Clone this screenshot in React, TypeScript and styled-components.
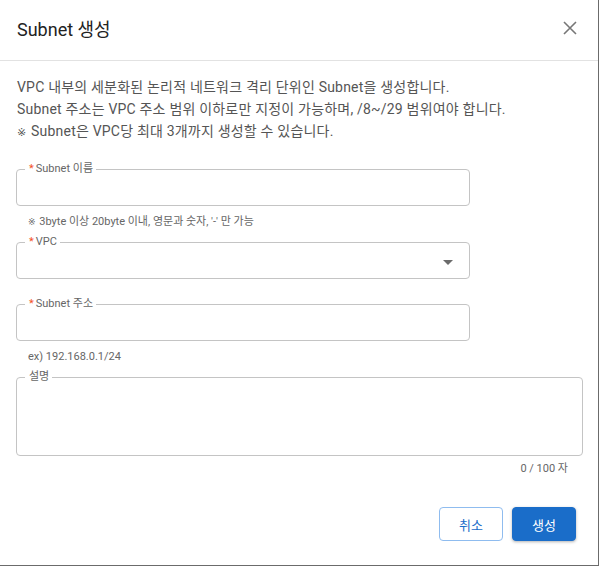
import styled, { createGlobalStyle } from "styled-components";

const GlobalStyle = createGlobalStyle`
  * {
    box-sizing: border-box;
  }
  body {
    margin: 0;
    background: #ffffff;
    font-family: Roboto, "Noto Sans CJK KR", sans-serif;
  }
`;

const Dialog = styled.div`
  display: flex;
  flex-direction: column;
  width: 599px;
  height: 566px;
  background: #ffffff;
  border-right: 1px solid #6b6b6b;
  border-bottom: 1px solid #6b6b6b;
`;

const Header = styled.div`
  display: flex;
  align-items: center;
  justify-content: space-between;
  height: 61px;
  padding: 0 18px 4px 17px;
  border-bottom: 1px solid #e2e2e2;
`;

const Title = styled.h2`
  margin: 0;
  font-size: 18px;
  font-weight: 400;
  color: #222222;
`;

const CloseButton = styled.button`
  display: flex;
  align-items: center;
  justify-content: center;
  width: 20px;
  height: 20px;
  padding: 0;
  border: none;
  background: transparent;
  color: #777777;
  cursor: pointer;
`;

const Body = styled.div`
  display: flex;
  flex-direction: column;
  padding: 15px 15px 0 16px;
`;

const Description = styled.p`
  margin: 0 0 20px 1px;
  font-size: 14px;
  line-height: 22px;
  color: #555555;
  letter-spacing: 0.2px;
`;

const Mark = styled.span<{ $size: number }>`
  font-family: "DejaVu Sans", sans-serif;
  font-size: ${(props) => props.$size}px;
  line-height: 0;
  margin-right: 1px;
`;

const FieldBlock = styled.div<{ $spacing: number }>`
  margin-bottom: ${(props) => props.$spacing}px;
`;

const Outline = styled.fieldset<{ $width?: number }>`
  width: ${(props) => (props.$width ? `${props.$width}px` : "100%")};
  margin: 0;
  padding: 0 14px 0 12px;
  border: 1px solid #c4c4c4;
  border-radius: 4px;
`;

const Legend = styled.legend`
  margin-left: -4px;
  padding: 0 3px 0 4px;
  font-size: 11px;
  line-height: 14px;
  color: #666666;
`;

const Required = styled.span`
  color: #f4511e;
  margin-right: 2px;
`;

const Input = styled.input`
  display: block;
  width: 100%;
  height: 29px;
  border: none;
  outline: none;
  background: transparent;
  font-family: inherit;
  font-size: 13px;
  color: #333333;
`;

const SelectBox = styled.div`
  display: flex;
  align-items: center;
  justify-content: flex-end;
  height: 29px;
  padding-bottom: 2px;
`;

const Arrow = styled.span`
  width: 0;
  height: 0;
  margin-right: 2px;
  border-left: 5px solid transparent;
  border-right: 5px solid transparent;
  border-top: 5px solid #6b6b6b;
`;

const TextArea = styled.textarea`
  display: block;
  width: 100%;
  height: 71px;
  border: none;
  outline: none;
  resize: none;
  background: transparent;
  font-family: inherit;
  font-size: 13px;
`;

const Helper = styled.div`
  margin: 8px 0 5px 12px;
  font-size: 11px;
  line-height: 16px;
  color: #666666;
`;

const Counter = styled.div`
  align-self: flex-end;
  margin: 5px 15px 0 0;
  font-size: 11px;
  line-height: 16px;
  color: #666666;
`;

const Footer = styled.div`
  display: flex;
  justify-content: flex-end;
  gap: 9px;
  margin-top: auto;
  padding: 0 22px 24px;
`;

const Button = styled.button<{ $primary?: boolean }>`
  width: 64px;
  height: 34px;
  border-radius: 4px;
  font-family: inherit;
  font-size: 13px;
  cursor: pointer;
  border: 1px solid ${(props) => (props.$primary ? "#1a6dc9" : "#8fbcef")};
  background: ${(props) => (props.$primary ? "#1a6dc9" : "#ffffff")};
  color: ${(props) => (props.$primary ? "#ffffff" : "#1a6dc9")};
  box-shadow: ${(props) =>
    props.$primary ? "0 1px 3px rgba(0, 0, 0, 0.3)" : "none"};
`;

const App = () => {
  return (
    <>
      <GlobalStyle />
      <Dialog>
        <Header>
          <Title>Subnet 생성</Title>
          <CloseButton aria-label="닫기">
            <svg width="14" height="14" viewBox="0 0 14 14">
              <path
                d="M1 1 L13 13 M13 1 L1 13"
                stroke="currentColor"
                strokeWidth="1.6"
                fill="none"
              />
            </svg>
          </CloseButton>
        </Header>
        <Body>
          <Description>
            VPC 내부의 세분화된 논리적 네트워크 격리 단위인 Subnet을 생성합니다.
            <br />
            Subnet 주소는 VPC 주소 범위 이하로만 지정이 가능하며, /8~/29 범위여야
            합니다.
            <br />
            <Mark $size={11}>※</Mark> Subnet은 VPC당 최대 3개까지 생성할 수
            있습니다.
          </Description>

          <FieldBlock $spacing={0}>
            <Outline $width={454}>
              <Legend>
                <Required>*</Required>Subnet 이름
              </Legend>
              <Input />
            </Outline>
            <Helper>
              <Mark $size={9}>※</Mark> 3byte 이상 20byte 이내, 영문과 숫자, '-' 만
              가능
            </Helper>
          </FieldBlock>

          <FieldBlock $spacing={18}>
            <Outline $width={454}>
              <Legend>
                <Required>*</Required>VPC
              </Legend>
              <SelectBox>
                <Arrow />
              </SelectBox>
            </Outline>
          </FieldBlock>

          <FieldBlock $spacing={0}>
            <Outline $width={454}>
              <Legend>
                <Required>*</Required>Subnet 주소
              </Legend>
              <Input />
            </Outline>
            <Helper>ex) 192.168.0.1/24</Helper>
          </FieldBlock>

          <FieldBlock $spacing={0}>
            <Outline>
              <Legend>설명</Legend>
              <TextArea />
            </Outline>
          </FieldBlock>
          <Counter>0 / 100 자</Counter>
        </Body>
        <Footer>
          <Button>취소</Button>
          <Button $primary>생성</Button>
        </Footer>
      </Dialog>
    </>
  );
};

export default App;
